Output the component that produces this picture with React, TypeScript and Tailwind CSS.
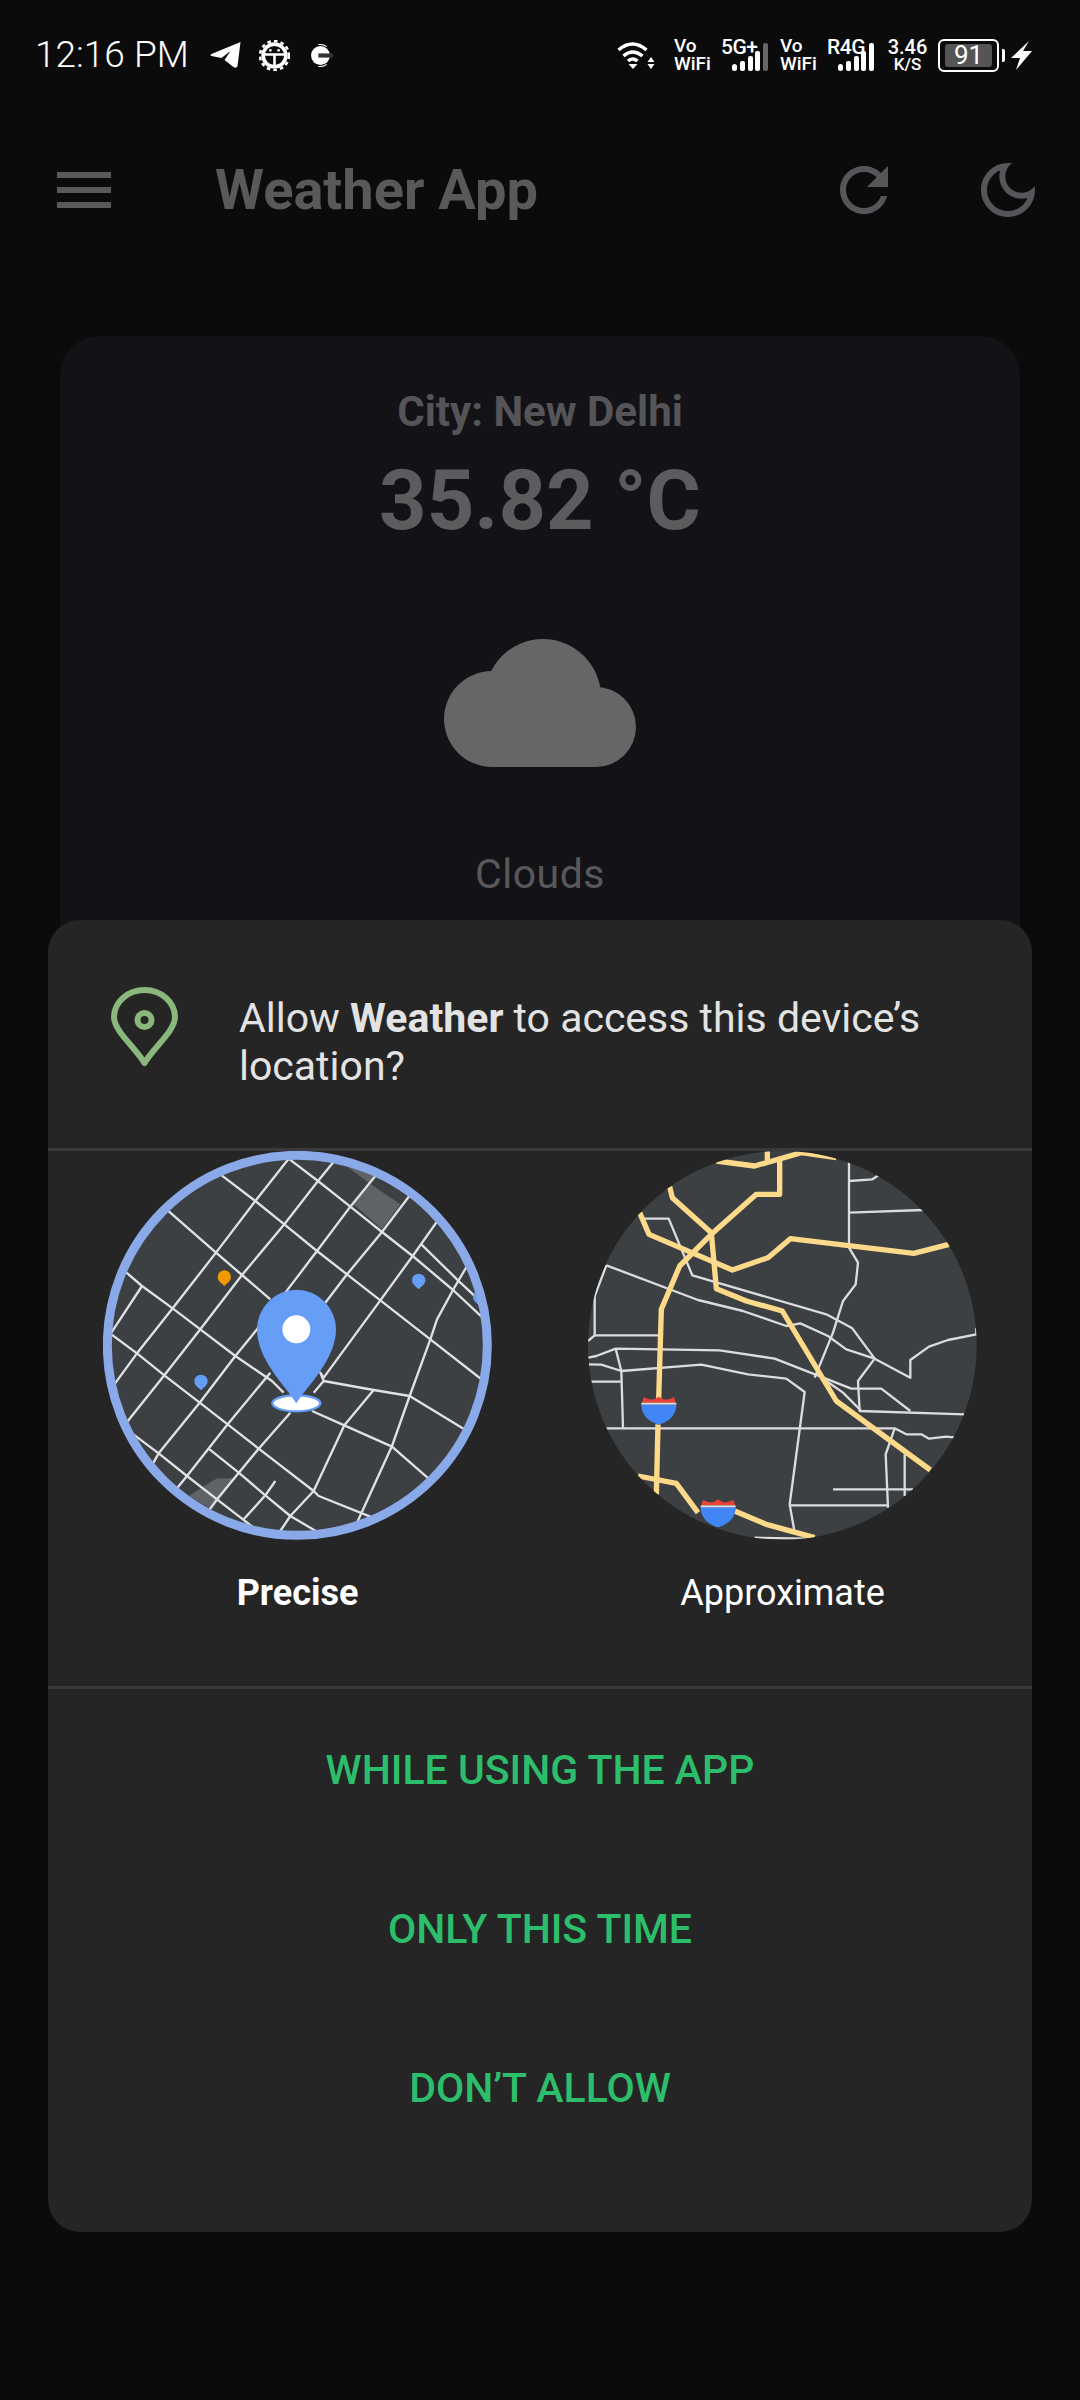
const preciseStreets = [
  '745,88 833,155 930,232 1025,308 1117,380 1238,482 1330,568',
  '540,135 645,215 732,285 830,365 920,435 1020,513 1170,630 1330,755',
  '382,243 527,370 605,437 690,510',
  '255,427 305,470 397,537 480,600 585,680 695,755 730,790',
  '213,615 290,672 372,738 478,820 562,885 655,958 820,1085 835,1100 990,1162',
  '272,910 355,972 440,1040 530,1110 640,1195',
  '505,958 595,1030 675,1098 750,1160 830,1207',
  '1143,345 1260,460 1330,525',
  '745,88 645,215 527,370 397,537 290,672 222,765',
  '880,97 833,155 732,285 605,437 480,600 372,738 260,878',
  '1005,140 930,232 830,365 735,490 650,600 585,680 478,820 355,972 338,1002',
  '1107,200 1025,308 920,435 855,520',
  '1190,277 1117,380 1020,513 850,745 840,730 850,755 820,790',
  '690,730 562,885 440,1040 410,1077',
  '750,850 655,958 530,1110 508,1140',
  '705,1055 675,1098 610,1170',
  '305,470 213,610',
  '1280,410 1238,482 1190,570 1170,630 1108,800 1055,950 950,1180',
  '850,755 1000,782 1108,800 1272,900',
  '1000,782 912,888 820,1085 750,1160 720,1205',
  '815,845 912,888 1055,952 1165,1048',
];

const approxStreets = [
  '245,268 327,268 398,438 800,555 878,597 945,688 1052,745 1052,692 1108,652 1165,632 1250,615 1250,595',
  '140,408 415,512 550,545 680,590 722,582 805,620 860,660 945,688 895,755 900,845 1215,855',
  '140,408 105,500 105,618 85,635',
  '105,618 297,618',
  '85,685 110,680 168,658 480,663 645,688 875,778 965,778 1052,845',
  '85,705 125,706 185,725 425,706 565,735 680,748 735,788 690,1125 705,1210',
  '168,658 185,725 190,895',
  '95,757 185,757',
  '140,897 1005,897 1040,915 1085,915 1108,928 1160,922 1190,925',
  '868,97 868,355 895,400 888,465 850,515 820,610 765,745',
  '868,155 938,150 958,137',
  '868,250 1090,242',
  '800,755 850,790 905,845',
  '1005,897 978,975 985,1135',
  '1035,975 1035,1100',
  '820,1080 1060,1080',
  '690,1128 985,1128',
  '585,1225 740,1228',
];

const approxHighways = [
  '470,95 585,110 725,70 830,85',
  '623,60 623,100',
  '660,95 660,195 590,195 460,310 360,410 305,540 297,810',
  '330,172 338,205 455,310 470,478 560,515 668,545 830,815 1112,1022',
  '240,250 268,315 518,422 625,385 692,328 1062,372 1168,345',
  '295,885 290,1095',
  '235,1040 350,1062 415,1150',
  '525,1145 620,1185 765,1225',
];

const SmallPin = ({ x, y, color }: { x: number; y: number; color: string }) => (
  <path
    d={`M${x} ${y + 25}c-8-8-20-14-20-27a20 20 0 0 1 40 0c0 13-12 19-20 27z`}
    fill={color}
  />
);

const PreciseMap = () => (
  <svg viewBox="188 65 1167 1167" className="w-[389px] h-[389px]">
    <defs>
      <clipPath id="preciseClip">
        <circle cx="771" cy="648" r="575" />
      </clipPath>
    </defs>
    <circle cx="771" cy="648" r="575" fill="#3c4043" />
    <g clipPath="url(#preciseClip)">
      <path d="M905 100L985 160 1080 225 1025 300 940 225 1000 140z" fill="#5f6368" />
      <path d="M445 1100L530 1047H585L515 1140z" fill="#5f6368" />
      {preciseStreets.map((s) => (
        <polyline key={s} points={s} fill="none" stroke="#dfe1e5" strokeWidth="7" strokeLinejoin="round" />
      ))}
      <SmallPin x={552} y={445} color="#f29900" />
      <SmallPin x={1135} y={455} color="#669df6" />
      <SmallPin x={482} y={758} color="#669df6" />
      <SmallPin x={1318} y={505} color="#669df6" />
    </g>
    <circle cx="771" cy="648" r="570" fill="none" stroke="#8aa9e8" strokeWidth="27" />
    <ellipse cx="768" cy="822" rx="72" ry="24" fill="#fff" stroke="#669df6" strokeWidth="7" />
    <path
      d="M768 822C735 770 650 690 650 600a118 118 0 0 1 237 0C887 690 801 770 768 822z"
      fill="#669df6"
    />
    <circle cx="768" cy="600" r="42" fill="#fff" />
  </svg>
);

const Shield = ({ dx, dy }: { dx: number; dy: number }) => (
  <g transform={`translate(${dx} ${dy})`}>
    <path d="M245 826H350C350 860 325 878 297 886 270 878 245 860 245 826z" fill="#4285f4" />
    <path d="M247 820L252 803Q270 814 285 809L297 802 309 809Q325 814 343 803L348 820z" fill="#ea4335" />
    <rect x="245" y="820" width="105" height="6" fill="#dadce0" />
  </g>
);

const ApproxMap = () => (
  <svg viewBox="85 65 1167 1167" className="w-[389px] h-[389px]">
    <defs>
      <clipPath id="approxClip">
        <circle cx="668" cy="648" r="583" />
      </clipPath>
    </defs>
    <circle cx="668" cy="648" r="583" fill="#3c4043" />
    <g clipPath="url(#approxClip)">
      {approxStreets.map((s) => (
        <polyline key={s} points={s} fill="none" stroke="#dadce0" strokeWidth="7" strokeLinejoin="round" />
      ))}
      {approxHighways.map((s) => (
        <polyline key={s} points={s} fill="none" stroke="#fdd98a" strokeWidth="16" strokeLinejoin="round" />
      ))}
      <Shield dx={0} dy={0} />
      <Shield dx={178} dy={308} />
    </g>
  </svg>
);

const Signal = ({ label, lastColor }: { label: string; lastColor: string }) => (
  <div className="relative w-[47px] h-[33px]">
    <span className="absolute left-0 -top-[2px] text-[21px] leading-[20px] font-medium tracking-[-0.5px] text-white">
      {label}
    </span>
    <svg viewBox="0 0 47 33" className="w-[47px] h-[33px]">
      <rect x="11" y="25" width="5" height="7" rx="2.500" fill="#fff" />
      <rect x="19" y="22" width="5" height="10" rx="2" fill="#fff" />
      <rect x="27" y="17" width="5" height="15" rx="2" fill="#fff" />
      <rect x="34" y="12" width="5" height="20" rx="2" fill="#fff" />
      <rect x="42" y="4" width="5" height="28" rx="2" fill={lastColor} />
    </svg>
  </div>
);

const VoWifi = () => (
  <div className="flex flex-col w-[36px] text-[19px] leading-[18px] font-medium text-white">
    <span>Vo</span>
    <span>WiFi</span>
  </div>
);

const StatusBar = () => (
  <div className="flex items-center h-[110px] pl-[35px] pr-[48px] text-white">
    <span className="text-[37px] font-light">12:16 PM</span>
    <svg viewBox="0 0 30 26" className="ml-[21px] w-[31px] h-[26px]">
      <path d="M30 0L27 24Q26 27 23 25L14 18 20 9 11 16 1 14Q-1 13 1 12z" fill="#fff" />
    </svg>
    <svg viewBox="0 0 30 30" className="ml-[18px] w-[31px] h-[31px]">
      <circle cx="15" cy="15" r="11" fill="none" stroke="#fff" strokeWidth="3.500" />
      <circle cx="15" cy="15" r="14" fill="none" stroke="#fff" strokeWidth="2.500" strokeDasharray="3.500 3" />
      <path d="M4 14H26M15 14V26" stroke="#fff" strokeWidth="2.500" />
      <circle cx="11" cy="10" r="1.300" fill="#fff" />
      <circle cx="19" cy="10" r="1.300" fill="#fff" />
    </svg>
    <svg viewBox="0 0 22 22" className="ml-[20px] w-[23px] h-[23px]">
      <circle cx="10" cy="11" r="9" fill="#fff" />
      <path d="M8 0.500a11 11 0 0 1 8 2M8 21.500a11 11 0 0 0 8-2" fill="none" stroke="#fff" strokeWidth="1" />
      <rect x="8" y="9" width="14" height="4" fill="#333" />
    </svg>

    <div className="ml-auto flex items-center h-[33px]">
      <svg viewBox="0 0 37 29" className="w-[38px] h-[29px]">
        <path d="M1 9Q15-3 29 9" fill="none" stroke="#fff" strokeWidth="3.500" />
        <path d="M6 15Q15 7 25 15" fill="none" stroke="#fff" strokeWidth="3.500" />
        <path d="M10.500 20Q15 16 20 20" fill="none" stroke="#fff" strokeWidth="3.500" />
        <path d="M11 23H20L15.500 28z" fill="#fff" />
        <path d="M33.500 16L37 21H30zM30 23H37L33.500 28z" fill="#fff" />
      </svg>
      <div className="ml-[19px]">
        <VoWifi />
      </div>
      <div className="ml-[11px]">
        <Signal label="5G+" lastColor="#666" />
      </div>
      <div className="ml-[12px]">
        <VoWifi />
      </div>
      <div className="ml-[11px]">
        <Signal label="R4G" lastColor="#fff" />
      </div>
      <div className="ml-[14px] flex flex-col items-center w-[39px] font-medium">
        <span className="text-[20px] leading-[19px]">3.46</span>
        <span className="text-[17px] leading-[15px]">K/S</span>
      </div>
      <div className="ml-[11px] flex items-center">
        <div className="flex items-center justify-center w-[61px] h-[33px] rounded-[6px] border-[2px] border-white">
          <span className="flex items-center justify-center w-[47px] h-[23px] rounded-[3px] bg-[#555] text-[26px] leading-[23px]">
            91
          </span>
        </div>
        <div className="ml-[3px] w-[3px] h-[13px] rounded-r-[2px] bg-white" />
      </div>
      <svg viewBox="0 0 21 29" className="ml-[6px] w-[21px] h-[29px]">
        <path d="M18 0L0 17H9L5 29 21 10H12z" fill="#fff" />
      </svg>
    </div>
  </div>
);

const TopBar = () => (
  <div className="flex items-center h-[80px] mt-[40px] pl-[57px] pr-[36px]">
    <div className="flex flex-col gap-[9px] w-[54px] shrink-0">
      <div className="h-[6px] bg-[#5a5a5c]" />
      <div className="h-[6px] bg-[#5a5a5c]" />
      <div className="h-[6px] bg-[#5a5a5c]" />
    </div>
    <span className="ml-[104px] text-[56px] leading-[80px] font-bold text-[#59595b]">Weather App</span>
    <svg viewBox="0 0 24 24" className="ml-auto w-[72px] h-[72px]" fill="#56565a">
      <path d="M17.65 6.35C16.2 4.9 14.21 4 12 4c-4.42 0-7.99 3.58-7.99 8s3.57 8 7.99 8c3.73 0 6.84-2.55 7.73-6h-2.08c-.82 2.33-3.04 4-5.65 4-3.31 0-6-2.69-6-6s2.69-6 6-6c1.66 0 3.14.69 4.22 1.78L13 11h7V4l-2.35 2.35z" />
    </svg>
    <svg viewBox="0 0 24 24" className="ml-[72px] w-[72px] h-[72px]" fill="#56565a">
      <path d="M9.37 5.51C9.19 6.15 9.1 6.82 9.1 7.5c0 4.08 3.32 7.4 7.4 7.4.68 0 1.35-.09 1.99-.27C17.45 17.19 14.93 19 12 19c-3.86 0-7-3.14-7-7 0-2.93 1.81-5.45 4.37-6.49zM12 3c-4.97 0-9 4.03-9 9s4.03 9 9 9 9-4.03 9-9c0-.46-.04-.92-.1-1.36-.98 1.37-2.58 2.26-4.4 2.26-2.98 0-5.4-2.42-5.4-5.4 0-1.81.89-3.42 2.26-4.4C12.92 3.04 12.46 3 12 3z" />
    </svg>
  </div>
);

const WeatherCard = () => (
  <div className="flex flex-col items-center mx-[60px] mt-[106px] h-[700px] pt-[52px] rounded-[40px] bg-[#131317]">
    <span className="text-[42px] leading-[48px] font-bold text-[#555558]">City: New Delhi</span>
    <span className="mt-[15px] text-[83px] leading-[100px] font-bold text-[#5c5c5f]">35.82 °C</span>
    <svg viewBox="0 0 192 128" className="mt-[88px] w-[192px] h-[128px]" fill="#666">
      <circle cx="48" cy="80" r="48" />
      <circle cx="99" cy="58" r="58" />
      <circle cx="152" cy="88" r="40" />
      <rect x="48" y="70" width="104" height="58" />
    </svg>
    <span className="mt-[82px] text-[41px] leading-[50px] tracking-[0.5px] text-[#59595b]">Clouds</span>
  </div>
);

const PermissionDialog = () => (
  <div className="absolute left-[48px] top-[920px] w-[984px] h-[1312px] rounded-[32px] bg-[#252525]">
    <div className="flex items-start h-[231px] border-b-[3px] border-[#3a3a3a] pl-[63px] pr-[60px]">
      <svg viewBox="0 0 67 80" className="mt-[67px] shrink-0 w-[67px] h-[80px]">
        <path
          d="M33.500 76C25 61 3 44 3 30a30.500 27 0 0 1 61 0C64 44 42 61 33.500 76z"
          fill="none"
          stroke="#8ab77c"
          strokeWidth="6"
          strokeLinejoin="round"
        />
        <circle cx="33.500" cy="33" r="7" fill="none" stroke="#8ab77c" strokeWidth="6" />
      </svg>
      <p className="mt-[74px] ml-[61px] text-[41px] leading-[48px] text-[#e3e3e3]">
        Allow <b className="font-bold">Weather</b> to access this device’s location?
      </p>
    </div>

    <div className="flex h-[535px] pl-[55px] pr-[55px]">
      <div className="flex flex-col items-center w-[389px]">
        <PreciseMap />
        <span className="mt-[31px] text-[36px] leading-[44px] font-bold text-white">Precise</span>
      </div>
      <div className="flex flex-col items-center w-[389px] ml-auto">
        <ApproxMap />
        <span className="mt-[31px] text-[36px] leading-[44px] text-white">Approximate</span>
      </div>
    </div>

    <div className="flex flex-col items-center border-t-[3px] border-[#3a3a3a] pt-[2px] text-[41px] font-medium text-[#2dbe6c]">
      <button className="h-[159px]">WHILE USING THE APP</button>
      <button className="h-[159px]">ONLY THIS TIME</button>
      <button className="h-[159px]">DON’T ALLOW</button>
    </div>
  </div>
);

export default function App() {
  return (
    <div className="relative w-[1080px] h-[2400px] overflow-hidden bg-[#0b0b0c] font-['Roboto',sans-serif]">
      <StatusBar />
      <TopBar />
      <WeatherCard />
      <PermissionDialog />
    </div>
  );
}
